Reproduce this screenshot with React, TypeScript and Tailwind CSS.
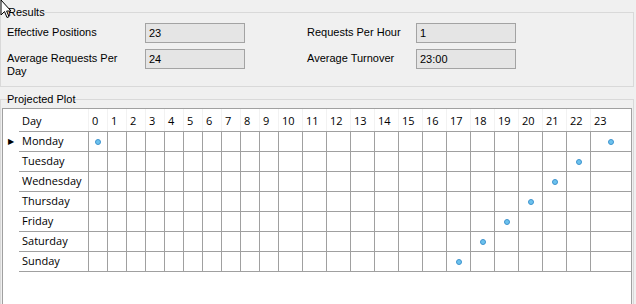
import React from "react";

const DAYS = ["Monday", "Tuesday", "Wednesday", "Thursday", "Friday", "Saturday", "Sunday"];
const HOURS = Array.from({ length: 24 }, (_, i) => i);

// hours with a plotted point for each day
const PLOT: Record<string, number[]> = {
  Monday: [0, 23],
  Tuesday: [22],
  Wednesday: [21],
  Thursday: [20],
  Friday: [19],
  Saturday: [18],
  Sunday: [17],
};

const COLS = "grid grid-cols-[16px_69px_repeat(10,19px)_repeat(13,24px)_1fr]";

function Field({ value }: { value: string }) {
  return (
    <div className="h-[20px] border border-[#a3a3a3] bg-[#e5e5e5] px-[3px] leading-[18px] text-black">
      {value}
    </div>
  );
}

function Label({ children }: { children: React.ReactNode }) {
  return <div className="mt-[3px] leading-[13px] text-black">{children}</div>;
}

function Cursor() {
  return (
    <svg className="absolute left-0 top-0" width="14" height="20" viewBox="0 0 14 20">
      <path d="M1 0 L1 15 L4.5 11.5 L7 17.5 L9 16.7 L6.6 11 L11 11 Z" fill="#fff" stroke="#000" strokeWidth="1" />
    </svg>
  );
}

export default function App() {
  return (
    <div className="relative h-[304px] w-[636px] overflow-hidden bg-[#f0f0f0] font-['Liberation_Sans',Arial,sans-serif] text-[11px]">
      <fieldset className="mt-[6px] w-[634px] border border-[#d9d9d9] pb-[8px] pl-[6px] pt-[4px]">
        <legend className="ml-[1px] leading-[13px] text-black">Results</legend>
        <div className="grid grid-cols-[138px_100px_62px_109px_100px] items-start gap-y-[6px]">
          <Label>Effective Positions</Label>
          <Field value="23" />
          <div />
          <Label>Requests Per Hour</Label>
          <Field value="1" />

          <Label>
            <div className="w-[115px]">Average Requests Per Day</div>
          </Label>
          <Field value="24" />
          <div />
          <Label>Average Turnover</Label>
          <Field value="23:00" />
        </div>
      </fieldset>

      <fieldset className="mt-[6px] w-[634px] border border-[#d9d9d9] pl-[1px] pt-[2px]">
        <legend className="ml-[5px] leading-[13px] text-black">Projected Plot</legend>
        <div className="h-[220px] w-[630px] border border-[#a0a0a0] bg-white font-['Open_Sans',sans-serif] text-[11px] text-black">
          {/* header */}
          <div className={`${COLS} h-[22px]`}>
            <div />
            <div className="flex items-center pl-[3px] pt-[2px]">Day</div>
            {HOURS.map((h) => (
              <div key={h} className="flex items-center border-l border-[#f2f2f2] pl-[3px] pt-[2px]">
                {h}
              </div>
            ))}
          </div>
          {DAYS.map((d, i) => (
            <div key={d} className={`${COLS} h-[20px]`}>
              <div className="flex items-center pl-[5px]">
                {i === 0 && <span className="text-[8px] leading-none">▶</span>}
              </div>
              <div
                className={`flex items-center border-t border-[#a0a0a0] pl-[3px] ${
                  i === DAYS.length - 1 ? "h-[21px] border-b" : ""
                }`}
              >
                {d}
              </div>
              {HOURS.map((h) => (
                <div
                  key={h}
                  className={`flex items-center justify-center border-l border-t border-[#a0a0a0] ${
                    i === DAYS.length - 1 ? "h-[21px] border-b" : ""
                  }`}
                >
                  {PLOT[d].includes(h) && (
                    <span className="h-[6px] w-[6px] rounded-full border border-[#3f94cf] bg-[#6cc2ee]" />
                  )}
                </div>
              ))}
            </div>
          ))}
        </div>
      </fieldset>

      <Cursor />
    </div>
  );
}
